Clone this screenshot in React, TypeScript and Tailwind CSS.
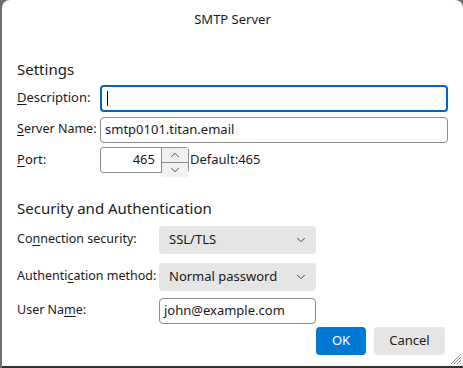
import { ChevronDown, ChevronUp } from "lucide-react";

const font = { fontFamily: '"Segoe UI", "Noto Sans", "Open Sans", sans-serif' };

function Key({ children }: { children: string }) {
  return <span className="underline underline-offset-2">{children}</span>;
}

function Select({ value }: { value: string }) {
  return (
    <div className="flex h-[28px] w-[157px] items-center justify-between rounded-[4px] bg-[#e5e5e5] pl-[10px] pr-[8px] text-[13px] text-[#1a1a1a]">
      <span>{value}</span>
      <ChevronDown size={14} strokeWidth={1.6} className="text-[#3a3a3a]" />
    </div>
  );
}

export default function App() {
  return (
    <div className="h-[368px] w-[463px] overflow-hidden bg-[#6f6f6f] pl-[2px]" style={font}>
      <div className="relative flex h-[366px] flex-col rounded-t-[8px] bg-white text-[13px] text-[#1a1a1a]">
        <div className="pt-[10px] text-center text-[13px]">SMTP Server</div>

        <div className="px-[15px]">
          <h2 className="mt-[29px] text-[15px] leading-[20px]">Settings</h2>

          <div className="mt-[6px] flex items-center">
            <label className="w-[83px] whitespace-nowrap">
              <Key>D</Key>escription:
            </label>
            <div className="flex h-[27px] flex-1 items-center rounded-[4px] border-2 border-[#0067c0] pl-[5px]">
              <span className="h-[15px] w-px bg-black" />
            </div>
          </div>

          <div className="mt-[5px] flex items-center">
            <label className="w-[83px] whitespace-nowrap text-[12.5px]">
              <Key>S</Key>erver Name:
            </label>
            <div className="flex h-[26px] flex-1 items-center rounded-[4px] border border-[#8d8d8d] pl-[4px]">
              smtp0101.titan.email
            </div>
          </div>

          <div className="mt-[4px] flex items-center">
            <label className="w-[83px]">
              <Key>P</Key>ort:
            </label>
            <div className="flex h-[26px] w-[89px] items-stretch rounded-[3px] border border-[#8d8d8d]">
              <div className="flex flex-1 items-center justify-end pr-[6px]">465</div>
              <div className="flex w-[27px] flex-col border-l border-[#8d8d8d]">
                <div className="flex flex-1 items-center justify-center border-b border-[#8d8d8d] bg-[#f0f0f0]">
                  <ChevronUp size={14} strokeWidth={1.4} className="text-[#333]" />
                </div>
                <div className="flex flex-1 items-center justify-center bg-[#f0f0f0]">
                  <ChevronDown size={14} strokeWidth={1.4} className="text-[#333]" />
                </div>
              </div>
            </div>
            <span className="ml-[1px]">Default:465</span>
          </div>

          <h2 className="mt-[25px] text-[15px] leading-[20px]">Security and Authentication</h2>

          <div className="mt-[8px] flex items-center">
            <label className="w-[142px] whitespace-nowrap text-[12.5px]">
              Co<Key>n</Key>nection security:
            </label>
            <Select value="SSL/TLS" />
          </div>

          <div className="mt-[9px] flex items-center">
            <label className="w-[142px] whitespace-nowrap text-[12.5px]">
              Authenti<Key>c</Key>ation method:
            </label>
            <Select value="Normal password" />
          </div>

          <div className="mt-[7px] flex items-center">
            <label className="w-[142px] whitespace-nowrap text-[12.5px]">
              User Na<Key>m</Key>e:
            </label>
            <div className="flex h-[26px] w-[157px] items-center rounded-[4px] border border-[#8d8d8d] pl-[4px]">
              john@example.com
            </div>
          </div>
        </div>

        <div className="mt-[3px] flex justify-end gap-[8px] pr-[18px]">
          <button className="h-[28px] w-[50px] rounded-[4px] bg-[#0078d4] text-[13px] text-white">OK</button>
          <button className="h-[28px] w-[71px] rounded-[4px] bg-[#e5e5e5] text-[13px] text-[#1a1a1a]">Cancel</button>
        </div>

        <svg className="absolute bottom-[1px] right-[1px]" width="14" height="14" viewBox="0 0 14 14">
          <path d="M13 3 L3 13 M13 6 L6 13 M13 9 L9 13 M13 12 L12 13" stroke="#888" strokeWidth="1" />
        </svg>
      </div>
      <div className="h-[2px] bg-[#333]" />
    </div>
  );
}
